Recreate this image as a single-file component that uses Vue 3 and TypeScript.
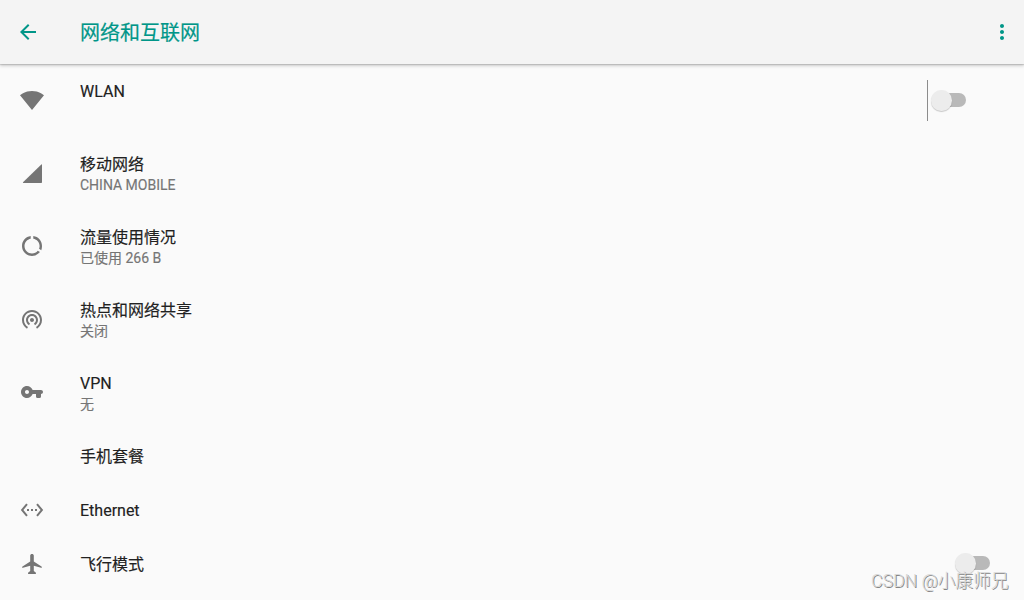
<script setup lang="ts">
interface Item {
  title: string
  summary?: string
  compact?: boolean
  icon?: string
  toggle?: 'divided' | 'plain'
}

const items: Item[] = [
  {
    title: 'WLAN',
    toggle: 'divided',
    icon: 'M12.01 22L24 7.3c-.45-.34-4.93-4.2-12-4.2C5.08 3.1.45 6.96 0 7.3L11.99 22l.01.01.01-.01z',
  },
  { title: '移动网络', summary: 'CHINA MOBILE', icon: 'M3.6 22H21.3q.7 0 .7-.7V3.7q0-.9-.7-.3L3 21.2q-.6.8.6.8z' },
  {
    title: '流量使用情况',
    summary: '已使用 266 B',
    icon: 'M13.3 2.1v2.55c3.7.62 6.3 3.65 6.3 7.35 0 1-.2 2-.55 2.85l2.2 1.3c.5-1.28.75-2.65.75-4.15 0-5.1-3.7-9.2-8.7-9.9zM12 19.5c-4.14 0-7.5-3.36-7.5-7.5 0-3.75 2.7-6.75 6.2-7.35V2.1C5.8 2.75 2 6.9 2 12c0 5.52 4.47 10 9.99 10 3.31 0 6.1-1.5 7.96-3.9l-2.2-1.3C16.4 18.5 14.4 19.5 12 19.5z',
  },
  {
    title: '热点和网络共享',
    summary: '关闭',
    icon: 'M12 11c-1.1 0-2 .9-2 2s.9 2 2 2 2-.9 2-2-.9-2-2-2zm6 2c0-3.31-2.69-6-6-6s-6 2.69-6 6c0 2.22 1.21 4.15 3 5.19l1-1.74c-1.19-.7-2-1.97-2-3.45 0-2.21 1.79-4 4-4s4 1.79 4 4c0 1.48-.81 2.75-2 3.45l1 1.74c1.79-1.04 3-2.97 3-5.19zM12 3C6.48 3 2 7.48 2 13c0 3.7 2.01 6.92 4.99 8.65l1-1.73C5.61 18.53 4 15.96 4 13c0-4.42 3.58-8 8-8s8 3.58 8 8c0 2.96-1.61 5.53-4 6.92l1 1.73c2.99-1.73 5-4.95 5-8.65 0-5.52-4.48-10-10-10z',
  },
  {
    title: 'VPN',
    summary: '无',
    icon: 'M12.65 10C11.83 7.67 9.61 6 7 6c-3.31 0-6 2.69-6 6s2.69 6 6 6c2.61 0 4.83-1.67 5.65-4H16v2.4q0 1.6 1.6 1.6h1.8q1.6 0 1.6-1.6V14c1.1 0 2-.9 2-2s-.9-2-2-2H12.65zM7 14c-1.1 0-2-.9-2-2s.9-2 2-2 2 .9 2 2-.9 2-2 2z',
  },
  { title: '手机套餐', compact: true },
  {
    title: 'Ethernet',
    compact: true,
    icon: 'M7.77 6.76L6.23 5.48.82 12l5.41 6.52 1.54-1.28L3.42 12l4.35-5.24zM7 13h2v-2H7v2zm10-2h-2v2h2v-2zm-6 2h2v-2h-2v2zm6.77-7.52l-1.54 1.28L20.58 12l-4.35 5.24 1.54 1.28L23.18 12l-5.41-6.52z',
  },
  {
    title: '飞行模式',
    compact: true,
    toggle: 'plain',
    icon: 'M21.5 14.5L13.8 9.4V3.6C13.8 2.6 13 2 12 2s-1.8.6-1.8 1.6v5.8l-7.7 5.1c-.8.6-.4 1.6.5 1.3l7.2-2.1v5.2l-1.9 1.5c-.6.6-.3 1.6.5 1.6h6.4c.8 0 1.1-1 .5-1.6l-1.9-1.5v-5.2l7.2 2.1c.9.3 1.3-.7.5-1.3z',
  },
]
</script>

<template>
  <div class="screen">
    <header class="bar">
      <svg class="icon" viewBox="0 0 24 24"><path d="M20 11H7.83l5.59-5.59L12 4l-8 8 8 8 1.41-1.41L7.83 13H20v-2z" /></svg>
      <h1>网络和互联网</h1>
      <svg class="icon" viewBox="0 0 24 24"><path d="M12 8c1.1 0 2-.9 2-2s-.9-2-2-2-2 .9-2 2 .9 2 2 2zm0 2c-1.1 0-2 .9-2 2s.9 2 2 2 2-.9 2-2-.9-2-2-2zm0 6c-1.1 0-2 .9-2 2s.9 2 2 2 2-.9 2-2-.9-2-2-2z" /></svg>
    </header>
    <main>
      <div v-for="item in items" :key="item.title" class="row" :class="{ compact: item.compact }">
        <svg class="icon" viewBox="0 0 24 24"><path v-if="item.icon" :d="item.icon" /></svg>
        <div class="text">
          <div class="title">{{ item.title }}</div>
          <div v-if="item.summary" class="summary">{{ item.summary }}</div>
        </div>
        <div v-if="item.toggle" class="control" :class="item.toggle">
          <div class="switch"><span class="thumb"></span></div>
        </div>
      </div>
    </main>
    <div class="watermark">CSDN @小康师兄</div>
  </div>
</template>

<style>
body {
  background: #fafafa;
  overflow: hidden;
}
</style>

<style scoped>
.screen {
  position: relative;
  width: 1024px;
  height: 600px;
  overflow: hidden;
  background: #fafafa;
  color: #212121;
  font-family: Roboto, "Noto Sans CJK SC", sans-serif;
}
.bar {
  position: relative;
  display: flex;
  align-items: center;
  box-sizing: border-box;
  height: 64px;
  padding: 0 10px 0 16px;
  background: #f4f4f4;
  color: #009688;
  box-shadow: 0 1px 1px rgba(0, 0, 0, 0.12), 0 2px 3px rgba(0, 0, 0, 0.17);
}
h1 {
  flex: 1;
  margin: 2px 0 0 40px;
  font-size: 20px;
  line-height: 28px;
  font-weight: 400;
  -webkit-text-stroke: 0.2px;
}
.icon {
  flex: none;
  width: 24px;
  height: 24px;
  fill: currentColor;
}
.row {
  display: flex;
  align-items: center;
  box-sizing: border-box;
  height: 73px;
  padding-bottom: 1px;
}
.row.compact {
  height: 54px;
  padding-bottom: 0;
}
.row .icon {
  margin-left: 20px;
  color: #757575;
}
.text {
  flex: 1;
  align-self: flex-start;
  margin-left: 36px;
  padding-top: 17px;
  -webkit-text-stroke: 0.15px;
}
.title {
  font-size: 16px;
  line-height: 22px;
}
.summary {
  margin-top: -1px;
  font-size: 14px;
  line-height: 20px;
  color: #757575;
}
.control {
  display: flex;
  align-items: center;
  box-sizing: border-box;
  height: 41px;
  padding-bottom: 1px;
}
.control.divided {
  margin: 1px 58px 0 0;
  padding-left: 4px;
  border-left: 1px solid #8c8c8c;
}
.control.plain {
  margin-right: 34px;
  padding-bottom: 2px;
}
.switch {
  display: flex;
  align-items: center;
  width: 34px;
  height: 14px;
  border-radius: 7px;
  background: #b9b9b9;
}
.thumb {
  flex: none;
  width: 20.5px;
  height: 20.5px;
  margin: 1px 0 0 -1px;
  border-radius: 50%;
  background: #ececec;
  box-shadow: 0 1px 1px rgba(0, 0, 0, 0.2);
}
.watermark {
  position: absolute;
  left: 871px;
  top: 569px;
  font-size: 17.7px;
  line-height: 24px;
  white-space: nowrap;
  font-weight: 300;
  color: #d8d8d8;
  text-shadow: 1px 1px 0 #858585;
}
</style>
